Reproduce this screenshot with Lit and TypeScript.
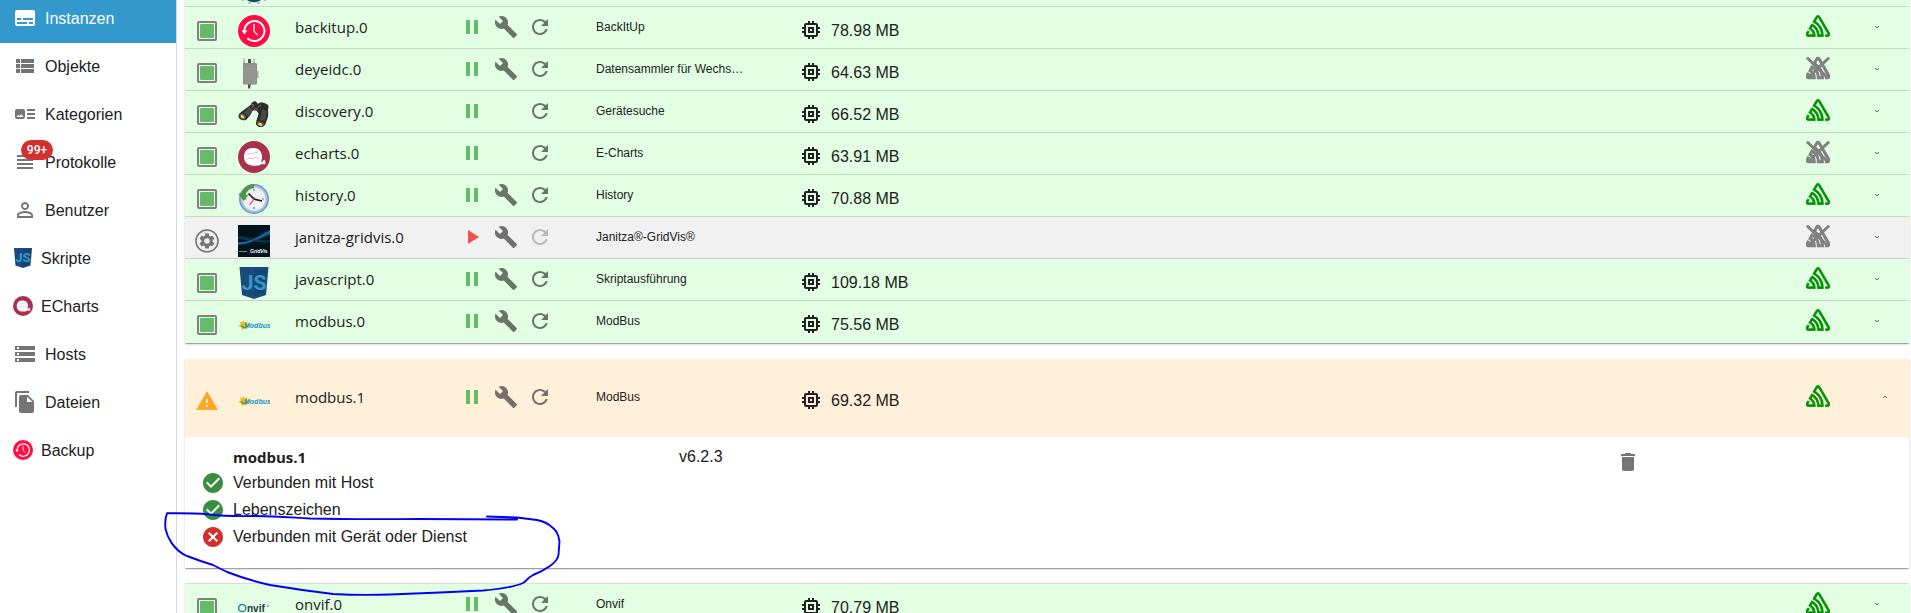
import { LitElement, html, svg, css, nothing } from "lit";
import type { TemplateResult, SVGTemplateResult } from "lit";
import { customElement } from "lit/decorators.js";
import { classMap } from "lit/directives/class-map.js";

const P = {
  subtitles: "M20 4H4c-1.1 0-2 .9-2 2v12c0 1.1.9 2 2 2h16c1.1 0 2-.9 2-2V6c0-1.1-.9-2-2-2zM4 12h4v2H4v-2zm10 6H4v-2h10v2zm6 0h-4v-2h4v2zm0-4H10v-2h10v2z",
  list: "M3 14h4v-4H3v4zm0 5h4v-4H3v4zM3 9h4V5H3v4zm5 5h13v-4H8v4zm0 5h13v-4H8v4zM8 5v4h13V5H8z",
  art: "M22 13h-8v-2h8v2zm0-6h-8v2h8V7zm-8 10h8v-2h-8v2zm-2-8v6c0 1.1-.9 2-2 2H4c-1.1 0-2-.9-2-2V9c0-1.1.9-2 2-2h6c1.1 0 2 .9 2 2zm-1.5 6l-2.25-3-1.75 2.26-1.25-1.51L3.5 15h7z",
  lines: "M4 15h16v-2H4v2zm0 4h16v-2H4v2zm0-8h16V9H4v2zm0-6v2h16V5H4z",
  person: "M12 5.9c1.16 0 2.1.94 2.1 2.1s-.94 2.1-2.1 2.1S9.9 9.16 9.9 8s.94-2.1 2.1-2.1m0 9c2.97 0 6.1 1.46 6.1 2.1v1.1H5.9V17c0-.64 3.13-2.1 6.1-2.1M12 4C9.79 4 8 5.79 8 8s1.79 4 4 4 4-1.79 4-4-1.79-4-4-4zm0 9c-2.67 0-8 1.34-8 4v3h16v-3c0-2.66-5.33-4-8-4z",
  storage: "M2 20h20v-4H2v4zm2-3h2v2H4v-2zM2 4v4h20V4H2zm4 3H4V5h2v2zm-4 7h20v-4H2v4zm2-3h2v2H4v-2z",
  files: "M16 1H4c-1.1 0-2 .9-2 2v14h2V3h12V1zm-1 4l6 6v10c0 1.1-.9 2-2 2H7.99C6.89 23 6 22.1 6 21l.01-14c0-1.1.89-2 1.99-2h7zm-1 7h5.5L14 6.5V12z",
  pause: "M6 19h4V5H6v14zm8-14v14h4V5h-4z",
  play: "M8 5v14l11-7z",
  build: "M22.7 19l-9.1-9.1c.9-2.3.4-5-1.5-6.9-2-2-5-2.4-7.4-1.3L9 6 6 9 1.6 4.7C.4 7.1.9 10.1 2.9 12.1c1.9 1.9 4.6 2.4 6.9 1.5l9.1 9.1c.4.4 1 .4 1.4 0l2.3-2.3c.5-.4.5-1.1.1-1.4z",
  refresh: "M17.65 6.35C16.2 4.9 14.21 4 12 4c-4.42 0-7.99 3.58-7.99 8s3.57 8 7.99 8c3.73 0 6.84-2.55 7.73-6h-2.08c-.82 2.33-3.04 4-5.65 4-3.31 0-6-2.69-6-6s2.69-6 6-6c1.66 0 3.14.69 4.22 1.78L13 11h7V4l-2.35 2.35z",
  memory: "M15 9H9v6h6V9zm-2 4h-2v-2h2v2zm8-2V9h-2V7c0-1.1-.9-2-2-2h-2V3h-2v2h-2V3H9v2H7c-1.1 0-2 .9-2 2v2H3v2h2v2H3v2h2v2c0 1.1.9 2 2 2h2v2h2v-2h2v2h2v-2h2c1.1 0 2-.9 2-2v-2h2v-2h-2v-2h2zm-4 6H7V7h10v10z",
  warning: "M1 21h22L12 2 1 21zm12-3h-2v-2h2v2zm0-4h-2v-4h2v4z",
  trash: "M6 19c0 1.1.9 2 2 2h8c1.1 0 2-.9 2-2V7H6v12zM19 4h-3.5l-1-1h-5l-1 1H5v2h14V4z",
  check: "M12 2C6.48 2 2 6.48 2 12s4.48 10 10 10 10-4.48 10-10S17.52 2 12 2zm-2 15l-5-5 1.41-1.41L10 14.17l7.59-7.59L19 8l-9 9z",
  cancel: "M12 2C6.47 2 2 6.47 2 12s4.47 10 10 10 10-4.47 10-10S17.53 2 12 2zm5 13.59L15.59 17 12 13.41 8.41 17 7 15.59 10.59 12 7 8.41 8.41 7 12 10.59 15.59 7 17 8.41 13.41 12 17 15.59z",
  gear: "M19.14 12.94c.04-.3.06-.61.06-.94 0-.32-.02-.64-.07-.94l2.03-1.58c.18-.14.23-.41.12-.61l-1.92-3.32c-.12-.22-.37-.29-.59-.22l-2.39.96c-.5-.38-1.03-.7-1.62-.94l-.36-2.54c-.04-.24-.24-.41-.48-.41h-3.84c-.24 0-.43.17-.47.41l-.36 2.54c-.59.24-1.13.57-1.62.94l-2.39-.96c-.22-.08-.47 0-.59.22L2.74 8.87c-.12.21-.08.47.12.61l2.03 1.58c-.05.3-.09.63-.09.94s.02.64.07.94l-2.03 1.58c-.18.14-.23.41-.12.61l1.92 3.32c.12.22.37.29.59.22l2.39-.96c.5.38 1.03.7 1.62.94l.36 2.54c.05.24.24.41.48.41h3.84c.24 0 .44-.17.47-.41l.36-2.54c.59-.24 1.13-.56 1.62-.94l2.39.96c.22.08.47 0 .59-.22l1.92-3.32c.12-.22.07-.47-.12-.61l-2.01-1.58zM12 15.6c-1.98 0-3.6-1.62-3.6-3.6s1.62-3.6 3.6-3.6 3.6 1.62 3.6 3.6-1.62 3.6-3.6 3.6z",
  sentry: "M13.91 2.505c-.873-1.448-2.972-1.448-3.844 0L6.904 7.92a15.478 15.478 0 0 1 8.53 12.811h-2.221A13.301 13.301 0 0 0 5.784 9.814l-2.926 5.06a7.65 7.65 0 0 1 4.435 5.848H2.194a.365.365 0 0 1-.298-.534l1.413-2.402a5.16 5.16 0 0 0-1.614-.913L.296 19.275a2.182 2.182 0 0 0 .812 2.999 2.24 2.24 0 0 0 1.086.288h6.983a9.322 9.322 0 0 0-3.845-8.318l1.11-1.922a11.47 11.47 0 0 1 4.95 10.24h5.915a17.242 17.242 0 0 0-7.885-15.28l2.244-3.845a.37.37 0 0 1 .504-.13c.255.14 9.75 16.708 9.928 16.9a.365.365 0 0 1-.327.543h-2.287c.029.612.029 1.223 0 1.831h2.297a2.206 2.206 0 0 0 1.922-3.31z",
};

const icon = (d: string): TemplateResult =>
  html`<svg class="icon" viewBox="0 0 24 24" width="24" height="24" fill="currentColor" aria-hidden="true"><path d=${d}></path></svg>`;

/* Adapter logos, each on a 32 x 32 board. */
const LOGOS: Record<string, SVGTemplateResult> = {
  admin: svg`<circle cx="16" cy="17" r="12.300" fill="#164477"/><path d="M11.500 28.500v2.500M20.500 28.500v2.500" stroke="#b3bccb" stroke-width="2.600"/><path d="M5 25.500v2.500M27 25.500v2.500" stroke="#a9b4c4" stroke-width="2"/>`,
  backitup: svg`<circle cx="16" cy="16" r="16" fill="#ff0d44"/><path d="M6.400 16.500a10 10 0 1 1 3 6.700" fill="none" stroke="#fff" stroke-width="2"/><path d="M3.600 15.400h5.800l-3 4z" fill="#fff"/><path d="M16 9v7.500l4 3.800" fill="none" stroke="#ffd6de" stroke-width="1.500"/>`,
  deye: svg`<path d="M6 1.500v6M16 1.500v6" stroke="#8b908b" stroke-width="1"/><path d="M10 2h3v5h-3zM10 27h3l-1 4.500h-2z" fill="#4e524e"/><rect x="5" y="6" width="14" height="21.500" rx="1" fill="#8d8f8d"/><path d="M19 14h1.500v7H19z" fill="#a9aca9"/><path d="M7 8v18M9 8v18M11 8v18M13 8v18M15 8v18M17 8v18" stroke="#a0a2a0" stroke-width=".8"/>`,
  binoculars: svg`<path d="M12.500 6c1-2.500 3.500-4.500 5.500-3.500l2 2.500 2-1.500c2-.5 8 1 8.500 3.500l-.5 5c1 4-1 9-2.500 13-1.500 4-7.500 4-9.500.5-.5-3 2-7 2.500-11l-2-3h-4l-2.500 5-4 4.500c-2 .8-7 0-7.500-3.500-.3-2.500 2-4 4-5.500z" fill="#2e2b2b"/><path d="M11 8l4 3-4 7-5-4zM24 10l5 2-2 10-5-1z" fill="#4b4747"/><path d="M13 5l3 1-2 3M20 8l3-2M16 10h4" stroke="#777" stroke-width="1" fill="none"/><ellipse cx="4.600" cy="17.500" rx="3.400" ry="2.500" transform="rotate(35 4.600 17.500)" fill="#6d5f42"/><ellipse cx="4.500" cy="17.700" rx="2" ry="1.300" transform="rotate(35 4.500 17.700)" fill="#f3d26a"/><ellipse cx="22.500" cy="25" rx="4" ry="2.600" transform="rotate(20 22.500 25)" fill="#5c523d"/><ellipse cx="22.300" cy="25.300" rx="2.200" ry="1.400" transform="rotate(20 22.300 25.300)" fill="#f3d26a"/>`,
  echarts: svg`<circle cx="16" cy="16" r="16" fill="#aa314e"/><path d="M15 7c5.500 0 9 3.500 9 8.500 0 3-1 4.500-.5 6 1.500 0 1.500-3 3-2.600 1.500.6 0 2 1.200 3.300-1.500 2-2.500 1.300-3.700.600-1 1-3 2-8 2-6.500 0-10-3.500-10-9S9.500 7 15 7z" fill="#fff"/><path d="M9 14l3-2 2 1 3-2 3 1M9 18l3-1 3 1 3-2 3 2" fill="none" stroke="#dba9b5" stroke-width=".8"/>`,
  history: svg`<circle cx="16" cy="16" r="15" fill="#6f97c2"/><circle cx="16" cy="16" r="13.500" fill="#a9c4e4"/><circle cx="16" cy="16" r="11.500" fill="#eef1f3"/><path d="M16 1A15 15 0 0 0 3.500 10L.5 11l5 7 5-6-3-.500A11 11 0 0 1 16 5z" fill="#4f9440"/><path d="M16 6v2M16 24v2M6.500 16h2M24 16h2" stroke="#777" stroke-width="1.200"/><path d="M10.500 10.500L16 16l8 2" fill="none" stroke="#1c1c1c" stroke-width="1.700"/><path d="M17 14.500L11.500 22" stroke="#e1372f" stroke-width="1.100"/>`,
  gridvis: svg`<path d="M0 0h32v32H0z" fill="#04121c"/><path d="M0 17C12 19 22 9 32 5v5C22 13 12 20 0 20z" fill="#0a4f86"/><path d="M0 11c10 0 20 6 32 4v2c-12 2-22-2-32-3z" fill="#0a3350"/><path d="M0 18C12 19 22 11 32 6.500" fill="none" stroke="#1f86cc" stroke-width=".8"/><path d="M1 26.500h8" stroke="#9aa5ad" stroke-width=".8"/><text x="12" y="28" font-family="Liberation Sans" font-size="5" font-weight="700" font-style="italic" fill="#fff">GridVis</text>`,
  javascript: svg`<path d="M1.500 0h29L28 28l-12 4-12-4z" fill="#1b4a7d"/><path d="M16 2.500h11.800L25.600 26 16 29.200z" fill="#164274"/><text x="16" y="23" text-anchor="middle" font-family="Roboto" font-size="21" font-weight="700" fill="#3399cc">JS</text>`,
  modbus: svg`<path d="M5 11l1.500 2.500L9.500 12 9 15l3 1.500-3 1 .5 3-3-1.500L4 21.500l-.5-3L.5 17l2.500-2-1.500-2.500 3 .8z" fill="#f2b816"/><path d="M3 17l4 2 3-2" stroke="#4aa24a" stroke-width="1.500" fill="none"/><text x="6" y="18.500" font-family="Liberation Sans" font-size="7" font-weight="700" font-style="italic" fill="#1795c9">Modbus</text>`,
  onvif: svg`<circle cx="4.200" cy="16" r="3.600" fill="none" stroke="#2f7fb8" stroke-width="1.500"/><text x="9" y="19.500" font-family="Liberation Sans" font-size="10" font-weight="700" fill="#1f3a54">nvif</text><path d="M29 14h2" stroke="#1f3a54" stroke-width=".8"/>`,
};

const logo = (name: string, size: number): TemplateResult =>
  html`<svg class="logo" viewBox="0 0 32 32" width=${size} height=${size} aria-hidden="true">${LOGOS[name]}</svg>`;

interface NavItem { label: string; icon?: string; logo?: string; active?: boolean; badge?: string; }

const NAV: NavItem[] = [
  { label: "Instanzen", icon: P.subtitles, active: true },
  { label: "Objekte", icon: P.list },
  { label: "Kategorien", icon: P.art },
  { label: "Protokolle", icon: P.lines, badge: "99+" },
  { label: "Benutzer", icon: P.person },
  { label: "Skripte", logo: "javascript" },
  { label: "ECharts", logo: "echarts" },
  { label: "Hosts", icon: P.storage },
  { label: "Dateien", icon: P.files },
  { label: "Backup", logo: "backitup" },
];

interface Instance {
  id: string; logo: string; title: string; mem?: string;
  state: "ok" | "off" | "warn"; config: boolean; sentry: boolean; open?: boolean;
}

const INSTANCES: Instance[] = [
  { id: "backitup.0", logo: "backitup", title: "BackItUp", mem: "78.98 MB", state: "ok", config: true, sentry: true },
  { id: "deyeidc.0", logo: "deye", title: "Datensammler für Wechs…", mem: "64.63 MB", state: "ok", config: true, sentry: false },
  { id: "discovery.0", logo: "binoculars", title: "Gerätesuche", mem: "66.52 MB", state: "ok", config: false, sentry: true },
  { id: "echarts.0", logo: "echarts", title: "E-Charts", mem: "63.91 MB", state: "ok", config: false, sentry: false },
  { id: "history.0", logo: "history", title: "History", mem: "70.88 MB", state: "ok", config: true, sentry: true },
  { id: "janitza-gridvis.0", logo: "gridvis", title: "Janitza®-GridVis®", state: "off", config: true, sentry: false },
  { id: "javascript.0", logo: "javascript", title: "Skriptausführung", mem: "109.18 MB", state: "ok", config: true, sentry: true },
  { id: "modbus.0", logo: "modbus", title: "ModBus", mem: "75.56 MB", state: "ok", config: true, sentry: true },
  { id: "modbus.1", logo: "modbus", title: "ModBus", mem: "69.32 MB", state: "warn", config: true, sentry: true, open: true },
  { id: "onvif.0", logo: "onvif", title: "Onvif", mem: "70.79 MB", state: "ok", config: true, sentry: true },
];

const CHECKS = [
  { label: "Verbunden mit Host", ok: true },
  { label: "Lebenszeichen", ok: true },
  { label: "Verbunden mit Gerät oder Dienst", ok: false },
];

@customElement("app-root")
export class AppRoot extends LitElement {
  static styles = css`
    :host {
      display: flex;
      position: relative;
      height: 100vh;
      overflow: hidden;
      background: #fff;
      color: #212121;
      font: 16px/24px "Liberation Sans", Arial, sans-serif;
    }
    *, *::before { box-sizing: border-box; }
    svg { display: block; flex: none; }
    button {
      display: flex;
      align-items: center;
      justify-content: center;
      border: 0;
      padding: 0;
      background: none;
      color: #757575;
      font: inherit;
    }

    .nav {
      flex: none;
      width: 177px;
      border-right: 1px solid #d8d8d8;
    }
    /* Both panes are scrolled a little way down. */
    .nav-scroll { margin-top: -5px; }
    .nav-item {
      display: flex;
      align-items: center;
      gap: 8px;
      height: 48px;
      padding: 0 0 2px 13px;
      color: inherit;
      text-decoration: none;
    }
    .nav-item .icon { color: #757575; }
    .nav-item.active { background: #3399cc; color: #fff; }
    .nav-item.active .icon { color: #fff; }
    .label { padding-top: 2px; }
    .glyph { position: relative; }
    .badge {
      position: absolute;
      top: -10px;
      left: 8px;
      width: 32px;
      height: 20px;
      border-radius: 10px;
      background: #d32f2f;
      color: #fff;
      font: 500 12px/20px Roboto, sans-serif;
      text-align: center;
    }

    .main {
      flex: 1;
      min-width: 0;
      padding: 0 2px 0 8px;
    }
    .list { margin-top: -35px; }
    .card {
      background: #fff;
      box-shadow: 0 -1px 0 rgba(0, 0, 0, 0.12), 0 2px 1px -1px rgba(0, 0, 0, 0.2),
        0 1px 1px rgba(0, 0, 0, 0.14), 0 1px 3px rgba(0, 0, 0, 0.12);
    }
    .card.open {
      margin: 16px 0;
      box-shadow: 0 2px 1px -1px rgba(0, 0, 0, 0.2), 0 1px 1px rgba(0, 0, 0, 0.14),
        0 1px 3px rgba(0, 0, 0, 0.12);
    }
    .row {
      display: grid;
      grid-template-columns: 53px 57px 160px 141px 203px 1fr 103px;
      height: 42px;
      align-items: start;
    }
    .open .row { height: 78px; padding: 18px 0; }
    .ok { background: #e3ffe3; }
    .off { background: #f1f1f1; }
    .warn { background: #fff1d9; }

    .state { padding: 12px 0 0 10px; }
    .box {
      width: 20px;
      height: 20px;
      margin: 2px;
      padding: 1px;
      border: 2px solid #808080;
      border-radius: 2px;
    }
    .fill { display: block; height: 14px; border-radius: 1px; background: #66bb6a; }
    .alert { color: #ffa726; }
    .ring { color: #757575; }
    .pic { padding-top: 8px; }
    .name { padding-top: 8px; font-family: "Open Sans", "Noto Sans", sans-serif; font-size: 15px; }
    .actions { display: grid; grid-template-columns: repeat(3, 34px); padding-top: 3px; }
    .actions button { height: 34px; }
    .actions .tool { color: #687568; }
    .off .tool { color: #6f6f6f; }
    .warn .tool { color: #75706a; }
    .actions .run { color: #66bb6a; }
    .actions .start { color: #ef5350; }
    .actions button:disabled { color: #b8b8b8; }
    .title {
      padding-top: 8px;
      font-size: 12px;
      white-space: nowrap;
    }
    .mem { display: flex; gap: 8px; padding-top: 11px; }
    .mem span { padding-top: 1px; }
    .tail { display: flex; align-items: center; height: 40px; }
    .tail .sentry { color: #009000; margin-bottom: 2px; }
    .tail .muted { color: #808080; }
    .tail button { width: 24px; height: 24px; margin-left: 35px; color: #4a524a; }
    .open .tail button { margin-left: 43px; }

    .details {
      display: grid;
      grid-template-columns: 494px 1fr auto;
      height: 131px;
      padding: 8px 269px 0 0;
    }
    .checks { margin: 0; padding: 0 0 0 16px; list-style: none; display: grid; gap: 3px; }
    .checks li { display: flex; gap: 8px; }
    .heading {
      margin: 0 0 2px 48px;
      font: 700 15px/24px "Open Sans", "Noto Sans", sans-serif;
    }
    .good { color: #388e3c; }
    .bad { color: #d32f2f; }
    .remove { align-self: start; padding-top: 5px; }

    .pen {
      position: absolute;
      top: 505px;
      left: 160px;
      pointer-events: none;
    }
  `;

  private renderNav(n: NavItem) {
    return html`<a href="#" class=${classMap({ "nav-item": true, active: !!n.active })}>
      <span class="glyph">${n.logo ? logo(n.logo, 20) : icon(n.icon!)}${n.badge ? html`<span class="badge">${n.badge}</span>` : nothing}</span>
      <span class="label">${n.label}</span>
    </a>`;
  }

  private renderState(state: Instance["state"]) {
    if (state === "warn") return html`<span class="alert">${icon(P.warning)}</span>`;
    if (state === "off")
      return html`<svg class="ring" viewBox="0 0 24 24" width="24" height="24" fill="currentColor" aria-hidden="true">
        <circle cx="12" cy="12" r="11" fill="none" stroke="currentColor" stroke-width="1.600"></circle>
        <path d=${P.gear} transform="translate(2.600 2.600) scale(.783)"></path></svg>`;
    return html`<div class="box"><span class="fill"></span></div>`;
  }

  private renderInstance(i: Instance) {
    const off = i.state === "off";
    return html`<article class=${classMap({ card: true, open: !!i.open })}>
      <div class="row ${i.state}">
        <div class="state">${this.renderState(i.state)}</div>
        <div class="pic">${logo(i.logo, 32)}</div>
        <div class="name">${i.id}</div>
        <div class="actions">
          <button class=${off ? "start" : "run"} aria-label=${off ? "Start" : "Pause"}>${icon(off ? P.play : P.pause)}</button>
          ${i.config ? html`<button class="tool" aria-label="Konfiguration">${icon(P.build)}</button>` : html`<span></span>`}
          <button class="tool" aria-label="Neustart" ?disabled=${off}>${icon(P.refresh)}</button>
        </div>
        <div class="title">${i.title}</div>
        <div class="mem">${i.mem ? html`${icon(P.memory)}<span>${i.mem}</span>` : nothing}</div>
        <div class="tail">
          <svg class=${classMap({ sentry: true, muted: !i.sentry })} viewBox="0 0 24 24" width="24" height="24" fill="currentColor" stroke="currentColor" aria-hidden="true">
            <path d=${P.sentry} stroke-width=${i.sentry ? ".8" : "1.2"}></path>
            ${i.sentry ? nothing : svg`<path d="M1.800 2.500L20 20M22.200 2.500L4 20" stroke-width="3" stroke-linecap="round"/>`}
          </svg>
          <button aria-label="Details" aria-expanded=${i.open ? "true" : "false"}>
            <svg viewBox="0 0 6 4" width="6" height="4" fill="none" stroke="currentColor" aria-hidden="true">
              <path d=${i.open ? "M1 2.700l2-1.400 2 1.400" : "M1 1.300l2 1.400 2-1.400"} stroke-width=".9"></path>
            </svg>
          </button>
        </div>
      </div>
      ${i.open ? this.renderDetails(i) : nothing}
    </article>`;
  }

  private renderDetails(i: Instance) {
    return html`<div class="details">
      <div>
        <h2 class="heading">${i.id}</h2>
        <ul class="checks">
          ${CHECKS.map((c) => html`<li><span class=${c.ok ? "good" : "bad"}>${icon(c.ok ? P.check : P.cancel)}</span><span>${c.label}</span></li>`)}
        </ul>
      </div>
      <span>v6.2.3</span>
      <button class="remove" aria-label="Löschen">${icon(P.trash)}</button>
    </div>`;
  }

  render() {
    return html`
      <nav class="nav"><div class="nav-scroll">${NAV.map((n) => this.renderNav(n))}</div></nav>
      <main class="main">
        <div class="list">
          <article class="card">
            <div class="row ok"><span></span><div class="pic">${logo("admin", 32)}</div></div>
          </article>
          ${INSTANCES.map((i) => this.renderInstance(i))}
        </div>
      </main>
      <svg class="pen" viewBox="160 505 410 100" width="410" height="100" fill="none" stroke="#0000f8" stroke-width="1.900" stroke-linecap="round" stroke-linejoin="round" aria-hidden="true">
        <path d="M517 519.500L420 519Q350 519.500 310 518.500C285 517 275 516 255 516Q225 516.500 210 514.500Q200 513 167 513.300C165 518 165 524 165.500 529C167 536 173 550 187 556Q200 561 213 565L227 572Q248 580 270 585Q300 590 333 594Q360 595.500 390 594.500L440 592.500L483 590.500Q512 588 523 583C528 580 526 579 533 575Q543 571 550 566Q558 560 558.500 555L559.500 541Q558 532 553 528Q547 522 537 520L517 517.500L487 516.500"></path>
      </svg>
    `;
  }
}
